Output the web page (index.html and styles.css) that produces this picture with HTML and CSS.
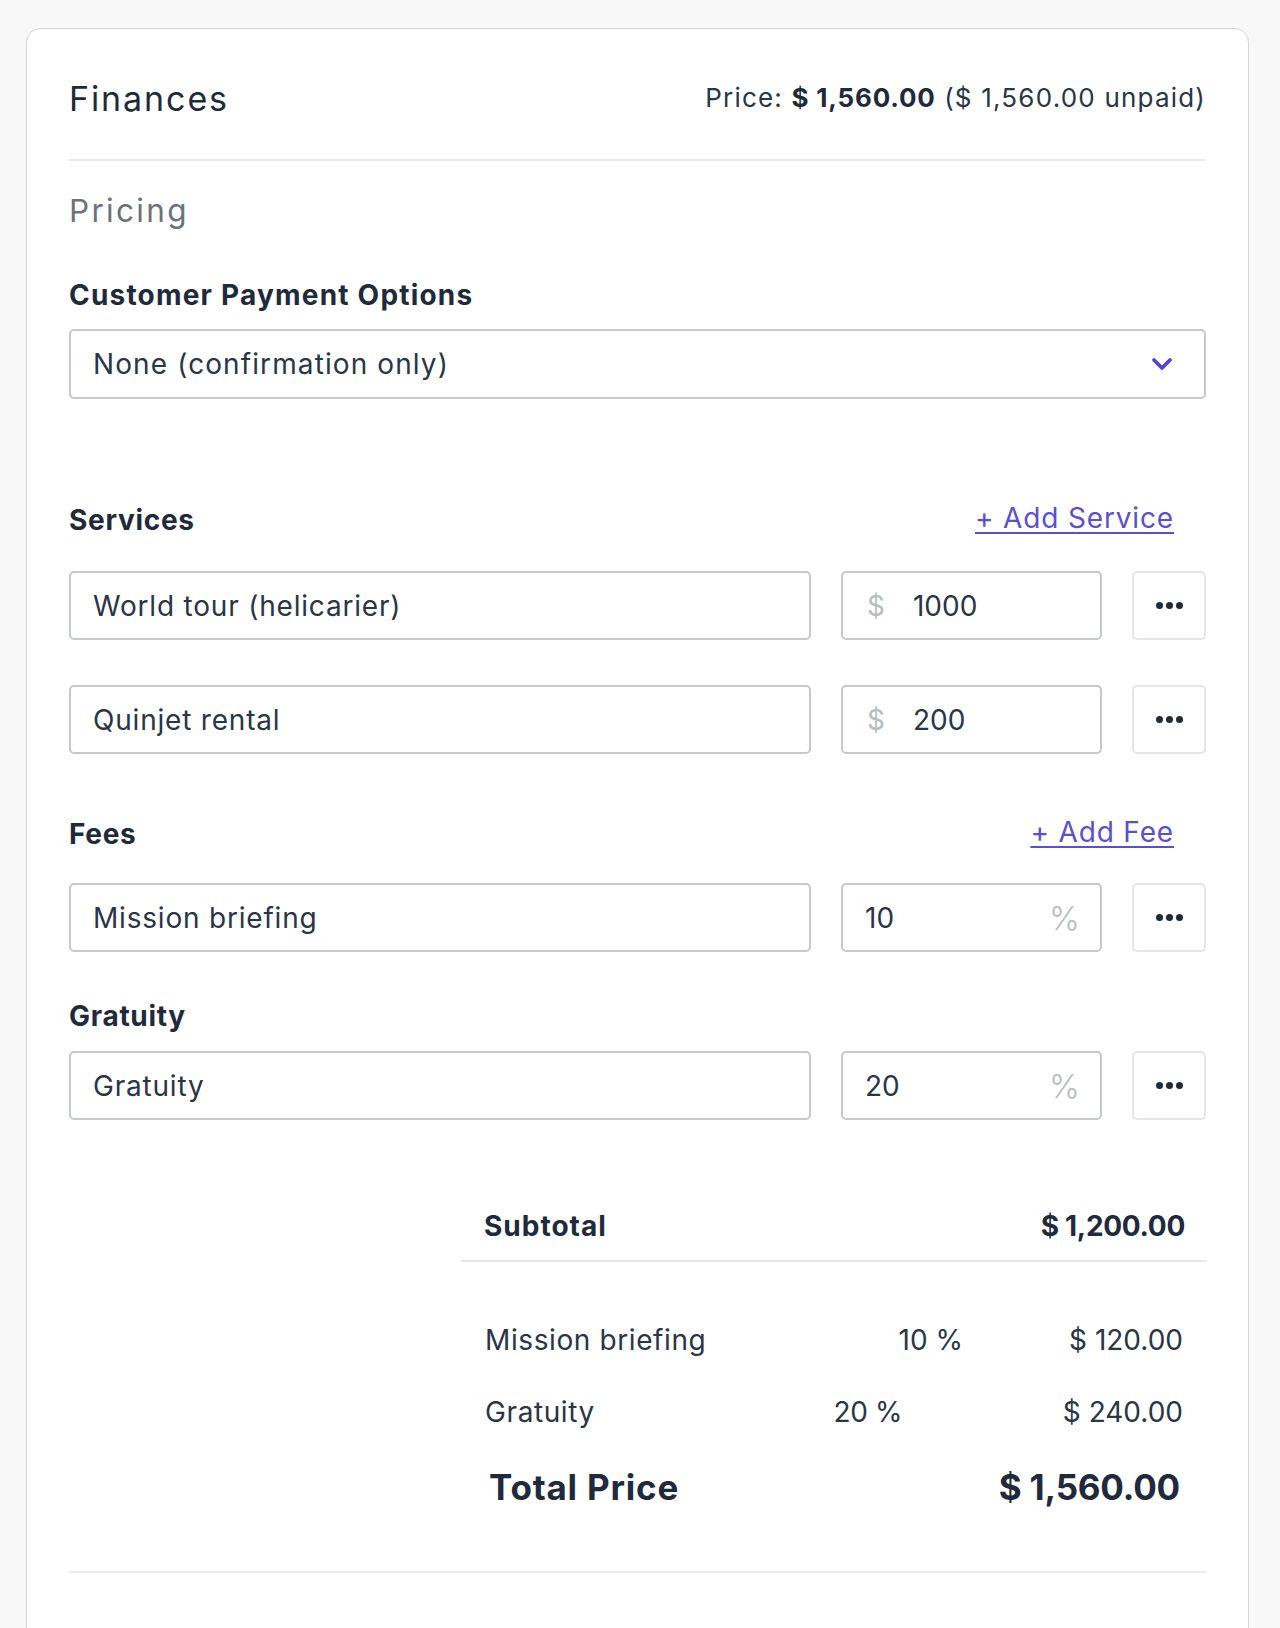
FILE: index.html
```html
<!DOCTYPE html>
<html lang="en">
<head>
<meta charset="utf-8">
<title>Finances</title>
<link rel="stylesheet" href="styles.css">
</head>
<body>
<div class="card">
  <div class="card-header">
    <h2 class="card-title">Finances</h2>
    <div class="price-summary">Price: <strong>$ 1,560.00</strong> ($ 1,560.00 unpaid)</div>
  </div>

  <h3 class="section-title">Pricing</h3>

  <div class="field-label label-payment">Customer Payment Options</div>
  <div class="select">
    <span class="select-value">None (confirmation only)</span>
    <svg class="chevron" width="24" height="16" viewBox="0 0 24 16"><polyline points="4,4 12,12 20,4" fill="none" stroke="#5346d4" stroke-width="3.8" stroke-linecap="round" stroke-linejoin="round"/></svg>
  </div>

  <div class="group-head head-services">
    <span class="field-label">Services</span>
    <a class="add-link" href="#">+ Add Service</a>
  </div>
  <div class="line-row">
    <div class="input name-input">World tour (helicarier)</div>
    <div class="input amount-input"><span class="prefix">$</span><span class="amount-value">1000</span></div>
    <button class="more-btn" type="button" aria-label="More"><span class="dots"><i></i><i></i><i></i></span></button>
  </div>
  <div class="line-row row-gap">
    <div class="input name-input">Quinjet rental</div>
    <div class="input amount-input"><span class="prefix">$</span><span class="amount-value">200</span></div>
    <button class="more-btn" type="button" aria-label="More"><span class="dots"><i></i><i></i><i></i></span></button>
  </div>

  <div class="group-head head-fees">
    <span class="field-label">Fees</span>
    <a class="add-link" href="#">+ Add Fee</a>
  </div>
  <div class="line-row">
    <div class="input name-input">Mission briefing</div>
    <div class="input pct-input"><span class="pct-value">10</span><span class="suffix">%</span></div>
    <button class="more-btn" type="button" aria-label="More"><span class="dots"><i></i><i></i><i></i></span></button>
  </div>

  <div class="field-label label-gratuity">Gratuity</div>
  <div class="line-row">
    <div class="input name-input">Gratuity</div>
    <div class="input pct-input"><span class="pct-value">20</span><span class="suffix">%</span></div>
    <button class="more-btn" type="button" aria-label="More"><span class="dots"><i></i><i></i><i></i></span></button>
  </div>

  <div class="summary">
    <div class="subtotal-row">
      <span>Subtotal</span>
      <span class="num">$ 1,200.00</span>
    </div>
    <div class="fee-line fee-line-a">
      <span>Mission briefing</span>
      <span class="fee-pct">10 %</span>
      <span class="fee-amt">$ 120.00</span>
    </div>
    <div class="fee-line fee-line-b">
      <span>Gratuity</span>
      <span class="fee-pct">20 %</span>
      <span class="fee-amt">$ 240.00</span>
    </div>
    <div class="total-row">
      <span>Total Price</span>
      <span class="num">$ 1,560.00</span>
    </div>
  </div>
  <div class="bottom-rule"></div>
</div>
</body>
</html>
```
FILE: styles.css
```css
* { box-sizing: border-box; }
html, body { margin: 0; }
body {
  background: #f8f8f8;
  padding: 28px 31px 0 26px;
  font-family: Inter, "Open Sans", sans-serif;
  color: #1f2a3a;
  height: 1628px;
  overflow: hidden;
}
.card {
  background: #fff;
  border: 1px solid #d6d6d6;
  border-radius: 14px;
  padding: 0 42px;
  min-height: 1620px;
}
.card-header {
  display: flex;
  justify-content: space-between;
  align-items: center;
  padding: 52px 0 42px;
  border-bottom: 2px solid #e9ebec;
}
.card-title {
  margin: 0;
  font-size: 34px;
  font-weight: 400;
  line-height: 36px;
  color: #1f2a3a;
  letter-spacing: 1.9px;
}
.price-summary {
  font-size: 26px;
  line-height: 36px;
  color: #2a3545;
  margin-top: -3px;
  letter-spacing: 1.2px;
}
.price-summary strong { font-weight: 700; color: #1f2a3a; letter-spacing: 0.8px; }
.section-title {
  margin: 32px 0 0;
  font-size: 31.5px;
  font-weight: 400;
  line-height: 36px;
  color: #6c7378;
  letter-spacing: 2.3px;
}
.field-label {
  font-size: 28px;
  font-weight: 700;
  line-height: 28px;
  color: #1f2a3a;
  display: block;
  letter-spacing: 0.7px;
}
.label-payment { margin-top: 52px; letter-spacing: 1.2px; }
.select {
  margin-top: 20px;
  height: 70px;
  border: 2px solid #c5c8cc;
  border-radius: 5px;
  display: flex;
  align-items: center;
  justify-content: space-between;
  padding: 0 30px 0 22px;
}
.select-value, .input {
  font-size: 28px;
  color: #2a3545;
  letter-spacing: 0.8px;
}
.select-value { letter-spacing: 1.1px; }
.chevron { display: block; }
.group-head {
  display: flex;
  justify-content: space-between;
  align-items: center;
  padding-right: 32px;
}
.head-services { margin-top: 107px; margin-bottom: 37px; }
.head-fees { margin-top: 66px; margin-bottom: 35px; }
.add-link {
  font-size: 28px;
  color: #5a4fd3;
  text-decoration: underline;
  text-underline-offset: 4px;
  text-decoration-thickness: 2px;
  line-height: 28px;
  margin-top: -4px;
  letter-spacing: 0.85px;
}
.line-row {
  display: grid;
  grid-template-columns: 742px 261px 74px;
  column-gap: 30px;
  height: 69px;
}
.row-gap { margin-top: 45px; }
.input {
  border: 2px solid #c5c8cc;
  border-radius: 5px;
  display: flex;
  align-items: center;
  padding: 0 22px;
}
.amount-input { padding-left: 24px; letter-spacing: 0; }
.prefix { color: #b8bcc1; margin-right: 28px; }
.pct-input { justify-content: space-between; padding-right: 20px; letter-spacing: 0; }
.suffix { color: #b8bcc1; font-size: 33px; font-weight: 300; }
.more-btn {
  border: 2px solid #e3e6e9;
  border-radius: 5px;
  background: #fff;
  display: flex;
  align-items: center;
  justify-content: center;
  padding: 0;
}
.dots { display: flex; gap: 3px; }
.dots i {
  width: 7px;
  height: 7px;
  border-radius: 50%;
  background: #1f2a3a;
  display: block;
}
.label-gratuity { margin-top: 50px; margin-bottom: 21px; }
.summary {
  margin-left: 392px;
  margin-top: 86px;
}
.subtotal-row {
  display: flex;
  justify-content: space-between;
  padding: 0 21px 14px 23px;
  font-size: 28px;
  font-weight: 700;
  line-height: 40px;
  border-bottom: 2px solid #e4e6e8;
  letter-spacing: 1px;
}
.subtotal-row .num { letter-spacing: -0.3px; }
.fee-line {
  display: grid;
  padding-left: 24px;
  padding-right: 23px;
  font-size: 28px;
  line-height: 36px;
  color: #2a3545;
  letter-spacing: 0.6px;
}
.fee-line-a { grid-template-columns: 1fr auto 220px; margin-top: 60px; }
.fee-line-b { grid-template-columns: 1fr auto 281px; margin-top: 36px; }
.fee-amt { text-align: right; }
.fee-pct, .fee-amt { letter-spacing: 0; }
.fee-line-b .fee-pct { letter-spacing: -0.4px; }
.total-row {
  display: flex;
  justify-content: space-between;
  padding: 0 26px 0 28px;
  margin-top: 35px;
  font-size: 35px;
  font-weight: 700;
  line-height: 44px;
  letter-spacing: 0.8px;
}
.total-row .num { letter-spacing: -0.2px; }
.bottom-rule {
  margin-top: 62px;
  border-bottom: 2px solid #e9ebec;
}
```
